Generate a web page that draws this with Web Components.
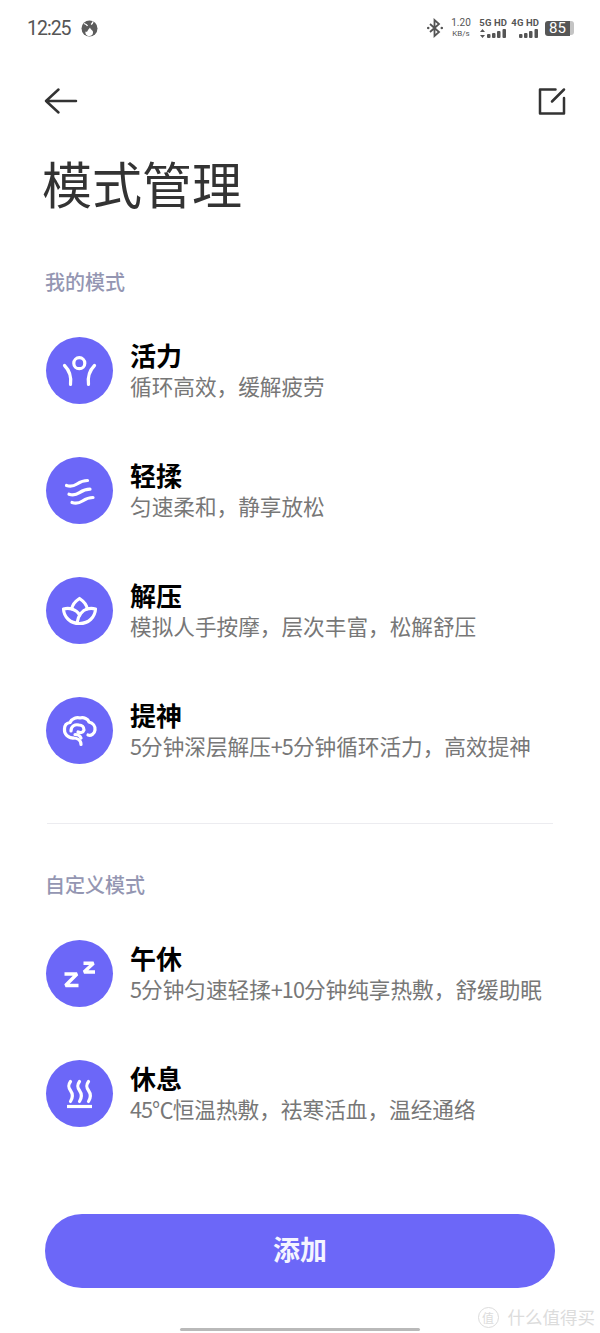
<!DOCTYPE html>
<html lang="zh-CN">
<head>
<meta charset="utf-8">
<title>模式管理</title>
<style>
  html, body { margin: 0; padding: 0; background: #fff; }
  body { font-family: "Noto Sans CJK SC", "Noto Sans", sans-serif; }
</style>
</head>
<body>
<app-page>
  <status-bar></status-bar>
  <nav-bar></nav-bar>
  <page-title>模式管理</page-title>
  <section-label>我的模式</section-label>
  <mode-row icon="vital" name="活力" desc="循环高效，缓解疲劳"></mode-row>
  <mode-row icon="knead" name="轻揉" desc="匀速柔和，静享放松"></mode-row>
  <mode-row icon="lotus" name="解压" desc="模拟人手按摩，层次丰富，松解舒压"></mode-row>
  <mode-row icon="brain" name="提神" desc="5分钟深层解压+5分钟循环活力，高效提神"></mode-row>
  <list-divider></list-divider>
  <section-label custom>自定义模式</section-label>
  <mode-row icon="sleep" name="午休" desc="5分钟匀速轻揉+10分钟纯享热敷，舒缓助眠"></mode-row>
  <mode-row icon="heat" name="休息" desc="45℃恒温热敷，祛寒活血，温经通络"></mode-row>
  <add-button>添加</add-button>
  <page-footer></page-footer>
</app-page>

<script>
const ICONS = {
  vital: `<circle cx="33.3" cy="26.200" r="5.500"/>
    <path d="M18.500 28.500C23 33 25.500 40 24.500 47.500"/>
    <path d="M48.500 28.500C44 33 41.500 40 42.500 47.500"/>`,
  knead: `<path d="M20.500 28.500c4 1.500 7 .8 10.500-1.500s7-3.500 10.500-3.500"/>
    <path d="M23 37.200c4 1.500 7 .8 10.500-1.500s7-3.500 10.500-3.500"/>
    <path d="M26 45.500c4 1.500 7 .8 10.500-1.500s7-3.500 10.500-3.500"/>`,
  lotus: `<path d="M33.500 21.500C29 24.500 26 28 26 32C23 31 20.500 31 17.500 32C18 40 24 46.500 33.500 46.500C43 46.500 49 40 49.500 32C46.500 31 44 31 41 32C41 28 38 24.500 33.500 21.500Z"/>
    <path d="M26 32c3 1 6 3 7.500 6"/>
    <path d="M41 32c-4 1-9 6-10 14"/>`,
  brain: `<path d="M27 41C22 41 18 37 18.500 32C18.500 28 21 26 24 25.500C26 21 31 20 34 21C38 20 42 22 43 25C47 26 49.500 29 49 33C48.500 37 45 39 42 38"/>
    <path d="M27 41C31 41 35 43 35 47.500"/>
    <path d="M25 34C25 29 29 27 33 28C36 28 38 30 38 33C37 36 34 36 32 35"/>
    <path d="M29 37.500C32 37.500 34 38.500 35 41"/>`,
  sleep: `<path d="M18.500 34H31L19.500 45.500H32.500" stroke-width="3.400" stroke-linecap="butt" stroke-linejoin="bevel"/>
    <path d="M37.500 23.300H47.500L38 32H49" stroke-width="3.400" stroke-linecap="butt" stroke-linejoin="bevel"/>`,
  heat: `<path d="M24.500 21.500c-2.500 3.500-2.500 5.500 0 9s2.500 7 0 11"/>
    <path d="M33.500 21.500c-2.500 3.500-2.500 5.500 0 9s2.500 7 0 11"/>
    <path d="M42.500 21.500c-2.500 3.500-2.500 5.500 0 9s2.500 7 0 11"/>
    <path d="M21 46.500H46" stroke-linecap="butt"/>`
};

// plain template-in-class component, every one has the same few lines
function define(tag, html, setup) {
  customElements.define(tag, class extends HTMLElement {
    constructor() {
      super();
      this.attachShadow({ mode: "open" });
    }
    connectedCallback() {
      this.shadowRoot.innerHTML = typeof html === "function" ? html(this) : html;
      if (setup) setup(this);
    }
  });
}

define("app-page", `
  <style>
    :host { display: flex; flex-direction: column; position: relative; width: 600px; height: 1333px; overflow: hidden; background: #fff; }
  </style>
  <slot></slot>`);

define("status-bar", `
  <style>
    :host { display: flex; align-items: center; height: 56px; padding: 0 27px; box-sizing: border-box; color: #555; font-family: Roboto, "Liberation Sans", sans-serif; }
    .time { font-size: 19.500px; font-weight: 400; letter-spacing: -1px; margin-top: 1px; }
    .globe { margin-left: 10px; margin-top: 1px; }
    .right { margin-left: auto; display: flex; align-items: center; margin-right: -1px; }
    .speed { display: flex; flex-direction: column; align-items: center; margin-left: 6px; width: 24px; line-height: 1; }
    .speed b { font-weight: 400; font-size: 10px; }
    .speed i { font-style: normal; font-size: 8px; margin-top: 2px; }
    .sim { display: flex; flex-direction: column; align-items: flex-end; width: 28px; line-height: 1; }
    .sim b { font-size: 9.500px; font-weight: 700; letter-spacing: .1px; white-space: nowrap; }
    .first { margin-left: 6px; }
    .second { margin-left: 4px; }
    .bars { margin-top: 2px; display: block; }
    .batt { display: flex; align-items: center; margin-left: 6px; }
    .batt span { display: block; width: 25px; height: 15px; line-height: 15px; border-radius: 3px 0 0 3px; background: #565656; color: #fff; font-size: 15px; text-align: center; }
    .batt u { display: block; width: 4px; height: 14px; background: #c4c4c4; border-radius: 0 3px 3px 0; }
  </style>
  <span class="time">12:25</span>
  <svg class="globe" width="17" height="17" viewBox="0 0 17 17">
    <circle cx="8.500" cy="8.500" r="8" fill="#5c5c5c"/>
    <path d="M8.500 16c-3 0-4.500-2-4-4.500 1 .6 1.500.3 2-.6.4-1 1.600-2 2.500-3.400.3 1.300 1.500 2.200 2.500 3.300 1 1.300.8 5.200-3 5.200z" fill="#fff"/>
    <path d="M3 3.500c1.500.5 3 1 3.500 2.500M12 1.500c-.3 1.500-1 2.500-2 3" stroke="#fff" stroke-width="1.300" fill="none"/>
  </svg>
  <div class="right">
    <svg width="16" height="20" viewBox="0 0 16 20" fill="none" stroke="#555" stroke-width="1.800">
      <path d="M3 6l9 8-4.500 4V2L12 6l-9 8"/>
      <circle cx="1.200" cy="10" r="1.300" fill="#555" stroke="none"/>
      <circle cx="14.800" cy="10" r="1.300" fill="#555" stroke="none"/>
    </svg>
    <div class="speed"><b>1.20</b><i>KB/s</i></div>
    <div class="sim first">
      <b>5G HD</b>
      <svg class="bars" width="27" height="9" viewBox="0 0 27 9" fill="#555">
        <path d="M2.500 0L5 3H0zM2.500 9L0 6h5z"/>
        <rect x="7" y="5" width="3.500" height="4" rx="1"/><rect x="12" y="4" width="3.500" height="5" rx="1"/><rect x="17" y="2" width="3.500" height="7" rx="1"/><rect x="22.500" y="0" width="3.500" height="9" rx="1"/>
      </svg>
    </div>
    <div class="sim second">
      <b>4G HD</b>
      <svg class="bars" width="27" height="9" viewBox="0 0 27 9" fill="#555">
        <rect x="7" y="5" width="3.500" height="4" rx="1"/><rect x="12" y="4" width="3.500" height="5" rx="1"/><rect x="17" y="2" width="3.500" height="7" rx="1"/><rect x="22.500" y="0" width="3.500" height="9" rx="1"/>
      </svg>
    </div>
    <div class="batt"><span>85</span><u></u></div>
  </div>`);

define("nav-bar", `
  <style>
    :host { display: flex; align-items: center; justify-content: space-between; height: 90px; padding: 0 34px 0 44px; }
    svg { display: block; fill: none; stroke: #333; stroke-width: 2.500; stroke-linecap: round; stroke-linejoin: round; }
  </style>
  <svg width="34" height="28" viewBox="0 0 34 28"><path d="M2 14H32M14.500 2.500L2 14l12.500 11.500"/></svg>
  <svg width="28" height="28" viewBox="0 0 28 28"><path d="M17.500 2.500H2V26.500H26V11M14 14.500L26 2.500"/></svg>`);

define("page-title", `
  <style>
    :host { display: block; margin: 6px 0 3px 42px; font-size: 50px; line-height: 60px; color: #333; font-weight: 400; }
  </style>
  <slot></slot>`);

define("section-label", `
  <style>
    :host { display: block; margin: 47px 0 8px 45px; font-size: 20px; line-height: 40px; color: #9496b2; font-weight: 500; }
    :host([custom]) { margin-top: 41px; }
  </style>
  <slot></slot>`);

define("mode-row", el => `
  <style>
    :host { display: flex; align-items: center; gap: 17px; height: 120px; padding-left: 46px; }
    .icon { flex: none; width: 67px; height: 67px; border-radius: 50%; background: #6c67f8; }
    svg { display: block; fill: none; stroke: #fff; stroke-width: 3.200; stroke-linecap: round; stroke-linejoin: round; }
    .name { font-size: 26px; line-height: 32px; color: #000; font-weight: 700; }
    .desc { font-size: 21.650px; line-height: 30px; color: #777; white-space: nowrap; }
    .num { letter-spacing: -1px; }
  </style>
  <div class="icon"><svg width="67" height="67" viewBox="0 0 67 67">${ICONS[el.getAttribute("icon")]}</svg></div>
  <div>
    <div class="name">${el.getAttribute("name")}</div>
    <div class="desc">${el.getAttribute("desc").replace(/[0-9+℃]+/g, m => `<span class="num">${m}</span>`)}</div>
  </div>`);

define("list-divider", `
  <style>
    :host { display: block; height: 1px; margin: 33px 47px 0; background: #ececf0; }
  </style>`);

define("add-button", `
  <style>
    :host { display: flex; align-items: center; justify-content: center; box-sizing: border-box; height: 74px; padding-bottom: 6px; margin: 61px 45px 0; border-radius: 37px; background: #6c67f8; color: #f4f4ff; font-size: 27px; font-weight: 700; }
  </style>
  <slot></slot>`);

define("page-footer", `
  <style>
    :host { display: block; }
    .mark { position: absolute; right: 5px; bottom: 4px; display: flex; align-items: center; gap: 9px; color: #dcdcdc; font-size: 17.500px; line-height: 24px; }
    .seal { width: 19px; height: 19px; border: 1.500px solid #dcdcdc; border-radius: 50%; font-size: 12px; line-height: 19px; text-align: center; }
    .home { position: absolute; left: 180px; bottom: 2px; width: 240px; height: 3px; background: #b9b9b9; border-radius: 2px; }
  </style>
  <div class="home"></div>
  <div class="mark"><span class="seal">值</span><span>什么值得买</span></div>`);
</script>
</body>
</html>
